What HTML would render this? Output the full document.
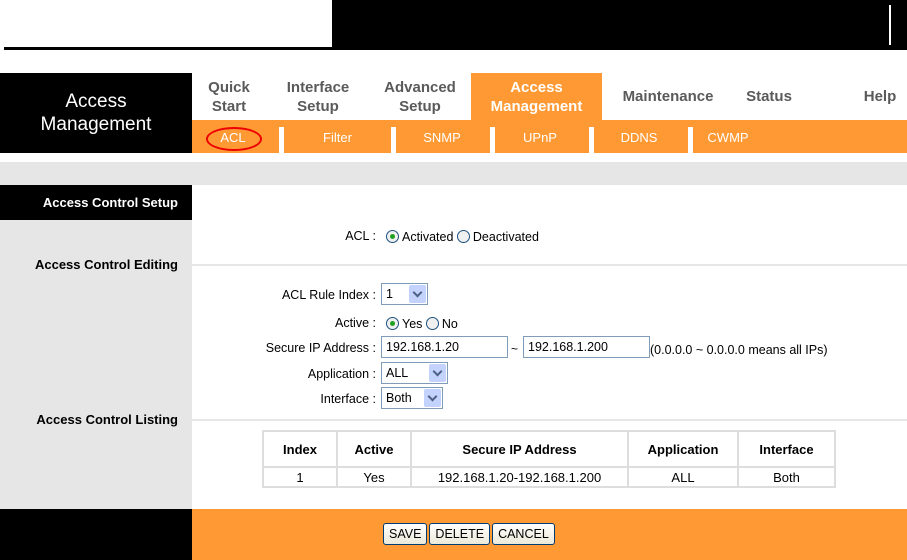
<!DOCTYPE html>
<html><head><meta charset="utf-8"><style>
*{margin:0;padding:0;box-sizing:border-box}
body{width:907px;height:560px;background:#fff;position:relative;overflow:hidden;font-family:"Liberation Sans",Arial,sans-serif}
.a{position:absolute}
.tab{position:absolute;top:73px;height:47px;color:#5a5a5a;font-weight:bold;font-size:15px;line-height:19px;text-align:center;display:flex;align-items:center;justify-content:center}
.sub{position:absolute;top:120px;height:33px;line-height:36px;color:#fff;font-size:13px;text-align:center}
.sep{position:absolute;top:127px;height:26px;width:5px;background:#fff}
.lbl{position:absolute;font-size:12.5px;color:#000;text-align:right;width:200px;left:176px}
.inp{position:absolute;border:1px solid #7f9db9;background:#fff;font-size:12.5px;padding-left:4px;line-height:20px;height:22px}
.sel{position:absolute;border:1px solid #7f9db9;background:#fff;font-size:12.5px;padding-left:4px;line-height:20px;height:22px}
.sel i{position:absolute;right:1px;top:1px;width:17px;height:18px;background:#c3d3fd;border-radius:2px}
.sel i:after{content:"";position:absolute;left:5px;top:4px;width:5px;height:5px;border-right:2px solid #4d6185;border-bottom:2px solid #4d6185;transform:rotate(45deg)}
.rad{display:inline-block;width:13px;height:13px;border:1px solid #1c5180;border-radius:50%;vertical-align:-2px;background:#f0f0f0;position:relative;margin-right:3px}
.rad.on:after{content:"";position:absolute;left:3px;top:3px;width:5px;height:5px;border-radius:50%;background:#21a121}
table{border-collapse:collapse;position:absolute;left:262px;top:430px;width:574px;font-size:13px}
td{border:2px solid #ddd;text-align:center}
.btn{display:inline-block;border:1px solid #003c74;border-radius:3px;background:linear-gradient(#fff,#ece9d8);font-size:12.5px;height:22px;line-height:20px;padding:0 5px;margin:0 1px}
</style></head><body>
<div class="a" style="left:332px;top:0;width:575px;height:50px;background:#000"></div>
<div class="a" style="left:889px;top:5px;width:2px;height:40px;background:#fff"></div>
<div class="a" style="left:4px;top:47px;width:893px;height:3px;background:#000"></div>

<div class="a" style="left:0;top:73px;width:192px;height:80px;background:#000;color:#fff;font-size:19px;line-height:23px;text-align:center;padding-top:17px">Access<br>Management</div>
<div class="a" style="left:192px;top:120px;width:715px;height:33px;background:#f93"></div>
<div class="a" style="left:471px;top:73px;width:131px;height:47px;background:#f93"></div>
<div class="tab" style="left:198px;width:62px">Quick<br>Start</div>
<div class="tab" style="left:275px;width:86px">Interface<br>Setup</div>
<div class="tab" style="left:375px;width:90px">Advanced<br>Setup</div>
<div class="tab" style="left:471px;width:131px;color:#fff">Access<br>Management</div>
<div class="tab" style="left:612px;width:112px">Maintenance</div>
<div class="tab" style="left:735px;width:68px">Status</div>
<div class="tab" style="left:855px;width:50px">Help</div>
<div class="sub" style="left:205px;width:56px">ACL</div>
<div class="a" style="left:206px;top:127px;width:56px;height:24px;border:2px solid #e00;border-radius:50%"></div>
<div class="sep" style="left:279px"></div>
<div class="sub" style="left:290px;width:95px">Filter</div>
<div class="sep" style="left:391px"></div>
<div class="sub" style="left:396px;width:92px">SNMP</div>
<div class="sep" style="left:490px"></div>
<div class="sub" style="left:495px;width:90px">UPnP</div>
<div class="sep" style="left:589px"></div>
<div class="sub" style="left:594px;width:90px">DDNS</div>
<div class="sep" style="left:688px"></div>
<div class="sub" style="left:693px;width:70px">CWMP</div>

<div class="a" style="left:0;top:162px;width:907px;height:23px;background:#e6e6e6"></div>
<div class="a" style="left:0;top:185px;width:192px;height:35px;background:#000;color:#fff;font-weight:bold;font-size:13px;line-height:35px;text-align:right;padding-right:14px">Access Control Setup</div>
<div class="a" style="left:0;top:220px;width:192px;height:289px;background:#e6e6e6"></div>
<div class="a" style="left:0;top:257px;width:192px;text-align:right;padding-right:14px;font-weight:bold;font-size:13px">Access Control Editing</div>
<div class="a" style="left:0;top:412px;width:192px;text-align:right;padding-right:14px;font-weight:bold;font-size:13px">Access Control Listing</div>
<div class="a" style="left:192px;top:264px;width:715px;height:2px;background:#e6e6e6"></div>
<div class="a" style="left:192px;top:419px;width:715px;height:2px;background:#e6e6e6"></div>

<div class="lbl" style="top:229px">ACL :</div>
<div class="a" style="left:386px;top:230px;font-size:12.5px"><span class="rad on"></span>Activated <span class="rad"></span>Deactivated</div>
<div class="lbl" style="top:288px">ACL Rule Index :</div>
<div class="sel" style="left:381px;top:283px;width:47px">1<i></i></div>
<div class="lbl" style="top:316px">Active :</div>
<div class="a" style="left:386px;top:317px;font-size:12.5px"><span class="rad on"></span>Yes <span class="rad"></span>No</div>
<div class="lbl" style="top:341px">Secure IP Address :</div>
<div class="inp" style="left:381px;top:336px;width:127px">192.168.1.20</div>
<div class="a" style="left:511px;top:342px;font-size:12px">~</div>
<div class="inp" style="left:523px;top:336px;width:127px">192.168.1.200</div>
<div class="a" style="left:650px;top:343px;font-size:12.5px">(0.0.0.0 ~ 0.0.0.0 means all IPs)</div>
<div class="lbl" style="top:367px">Application :</div>
<div class="sel" style="left:381px;top:362px;width:67px">ALL<i></i></div>
<div class="lbl" style="top:392px">Interface :</div>
<div class="sel" style="left:381px;top:387px;width:62px">Both<i></i></div>

<table>
<tr style="height:36px;font-weight:bold"><td style="width:74px">Index</td><td style="width:74px">Active</td><td style="width:217px">Secure IP Address</td><td style="width:110px">Application</td><td>Interface</td></tr>
<tr style="height:20px"><td>1</td><td>Yes</td><td>192.168.1.20-192.168.1.200</td><td>ALL</td><td>Both</td></tr>
</table>

<div class="a" style="left:0;top:509px;width:192px;height:51px;background:#000"></div>
<div class="a" style="left:192px;top:509px;width:715px;height:51px;background:#f93"></div>
<div class="a" style="left:382px;top:523px"><span class="btn">SAVE</span><span class="btn">DELETE</span><span class="btn">CANCEL</span></div>
</body></html>
